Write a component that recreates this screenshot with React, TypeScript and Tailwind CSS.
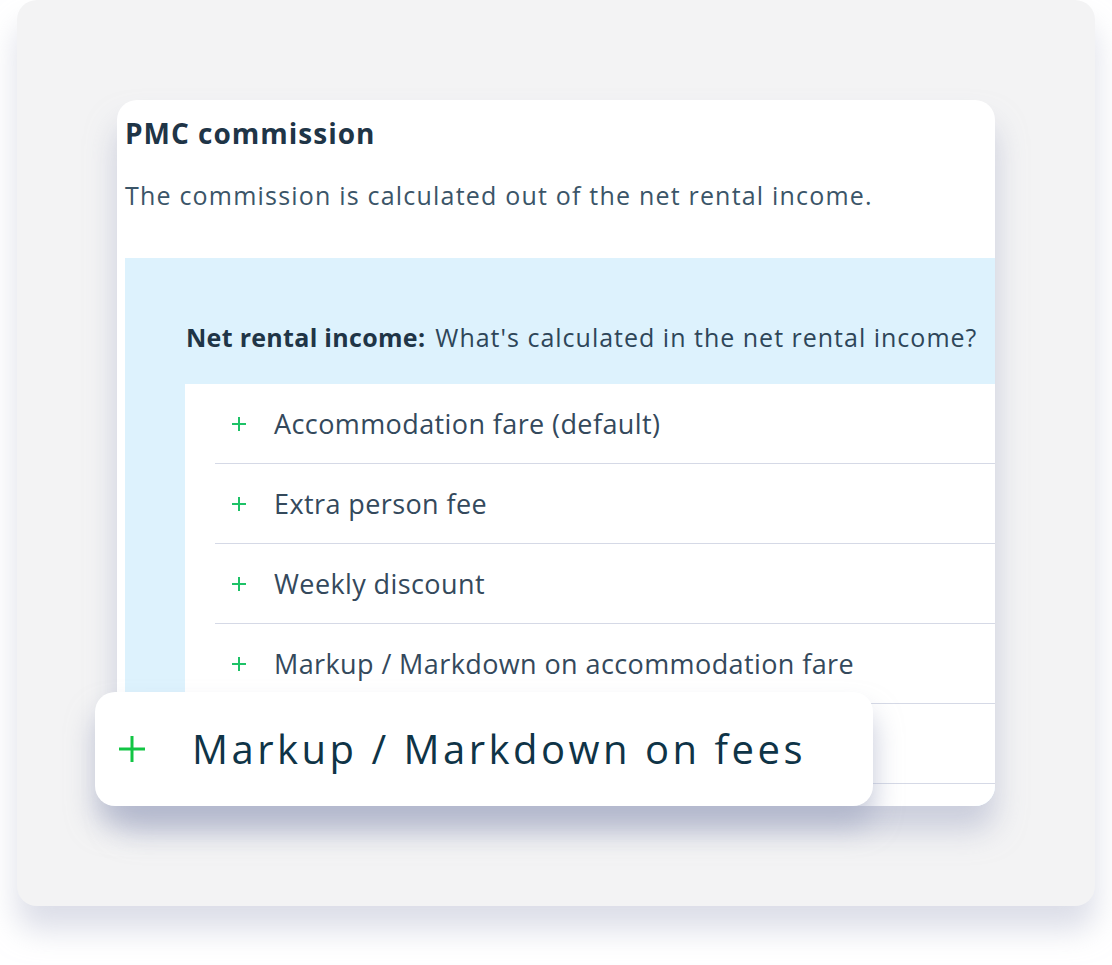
import React from "react";

const items = [
  "Accommodation fare (default)",
  "Extra person fee",
  "Weekly discount",
  "Markup / Markdown on accommodation fare",
  "Markup / Markdown on fees",
];

function Plus({ size, stroke, color }: { size: number; stroke: number; color: string }) {
  return (
    <svg width={size} height={size} viewBox={`0 0 ${size} ${size}`} className="shrink-0">
      <line x1={size / 2} y1={0} x2={size / 2} y2={size} stroke={color} strokeWidth={stroke} />
      <line x1={0} y1={size / 2} x2={size} y2={size / 2} stroke={color} strokeWidth={stroke} />
    </svg>
  );
}

export default function App() {
  return (
    <div
      className="w-[1112px] h-[965px] bg-white overflow-hidden"
      style={{ fontFamily: "'Open Sans', 'Noto Sans', sans-serif" }}
    >
      <div className="relative ml-[17px] w-[1078px] h-[906px] rounded-[20px] bg-[#f3f3f4] shadow-[0_24px_30px_rgba(196,200,216,0.6)] pt-[100px] pl-[100px]">
        <div className="w-[878px] h-[706px] rounded-[20px] bg-white overflow-hidden shadow-[0_24px_30px_rgba(170,175,200,0.55)] pl-[8px] flex flex-col">
          <h1 className="text-[28px] leading-[34px] font-bold tracking-[1px] text-[#1f3547] pt-[16px] whitespace-nowrap">
            PMC commission
          </h1>
          <p className="text-[25px] leading-[32px] tracking-[1.2px] text-[#3b5568] mt-[29px] whitespace-nowrap">
            The commission is calculated out of the net rental income.
          </p>
          <div className="mt-[47px] flex-1 bg-[#ddf2fd] flex flex-col">
            <div className="pl-[61px] pt-[64px] h-[126px] text-[25px] leading-[30px] text-[#2e4659] whitespace-nowrap">
              <span className="font-bold tracking-[0.3px] text-[#1f3547]">Net rental income:</span>
              <span className="ml-[10px] tracking-[1px]">What's calculated in the net rental income?</span>
            </div>
            <div className="ml-[60px] flex-1 bg-white pl-[30px]">
              {items.map((t) => (
                <div
                  key={t}
                  className="h-[80px] border-b border-[#d5d9e6] flex items-center pt-[1px]"
                >
                  <div className="w-[59px] pl-[17px] flex items-center">
                    <Plus size={14} stroke={2} color="#1dc267" />
                  </div>
                  <span className="text-[27px] tracking-[0.4px] text-[#34495c] whitespace-nowrap">{t}</span>
                </div>
              ))}
            </div>
          </div>
        </div>
        <div className="absolute left-[78px] top-[692px] w-[778px] h-[114px] rounded-[20px] bg-white shadow-[0_20px_28px_rgba(165,170,195,0.65)] flex items-center pl-[24px]">
          <Plus size={26} stroke={3} color="#12c544" />
          <span className="ml-[47px] text-[40px] tracking-[3.5px] text-[#0f3447] whitespace-nowrap">
            Markup / Markdown on fees
          </span>
        </div>
      </div>
    </div>
  );
}
